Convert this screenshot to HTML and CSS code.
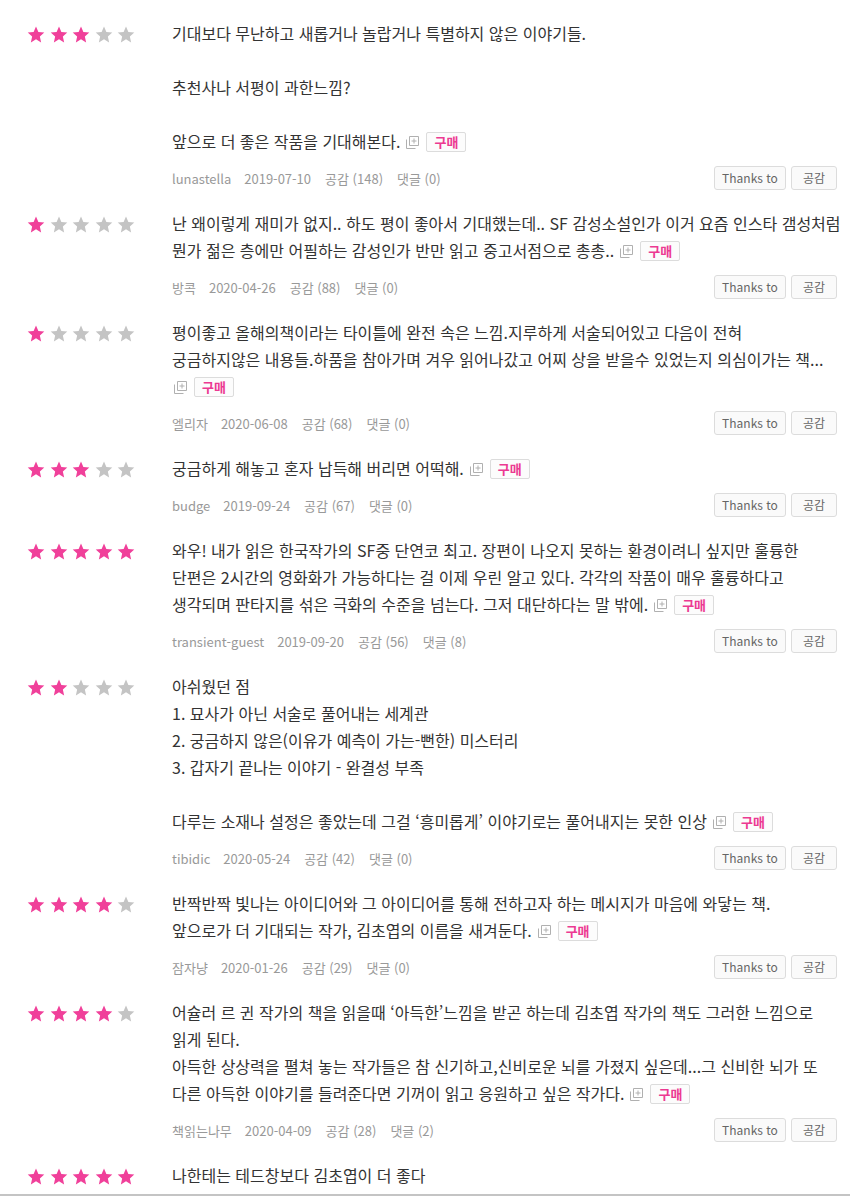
FILE: index.html
```html
<!DOCTYPE html>
<html lang="ko">
<head>
<meta charset="utf-8">
<title>리뷰</title>
<link rel="stylesheet" href="styles.css">
</head>
<body>
<svg class="defs" width="0" height="0" aria-hidden="true">
  <symbol id="star" viewBox="0 0 19 18.5">
    <path d="M9.5 .5 L12.1 6.5 L18.53 7.06 L13.7 11.4 L15.09 17.9 L9.5 14.5 L3.91 17.9 L5.3 11.4 L.47 7.06 L6.9 6.5Z"/>
  </symbol>
  <symbol id="more" viewBox="0 0 13 13">
    <path d="M3.5 .5 H12.5 V9.5 H3.5 Z M8 2.5 V7.5 M5.5 5 H10.5" fill="none" stroke="#b0b0b0" stroke-width="1"/>
    <path d="M.5 3.5 V12.5 H9.5" fill="none" stroke="#b0b0b0" stroke-width="1"/>
  </symbol>
</svg>
<div class="page">
  <ul class="reviews">
    <li class="review">
      <div class="stars s3"><svg><use href="#star"/></svg><svg><use href="#star"/></svg><svg><use href="#star"/></svg><svg><use href="#star"/></svg><svg><use href="#star"/></svg></div>
      <div class="body">
        <p class="text">기대보다 무난하고 새롭거나 놀랍거나 특별하지 않은 이야기들.<br><br>추천사나 서평이 과한느낌?<br><br>앞으로 더 좋은 작품을 기대해본다.<span class="more"><svg><use href="#more"/></svg></span><span class="buy">구매</span></p>
        <div class="meta"><span class="user">lunastella</span><span>2019-07-10</span><span>공감 (148)</span><span>댓글 (0)</span><div class="btns"><button class="btn thanks">Thanks to</button><button class="btn like">공감</button></div></div>
      </div>
    </li>
    <li class="review">
      <div class="stars s1"><svg><use href="#star"/></svg><svg><use href="#star"/></svg><svg><use href="#star"/></svg><svg><use href="#star"/></svg><svg><use href="#star"/></svg></div>
      <div class="body">
        <p class="text">난 왜이렇게 재미가 없지.. 하도 평이 좋아서 기대했는데.. SF 감성소설인가 이거 요즘 인스타 갬성처럼<br>뭔가 젊은 층에만 어필하는 감성인가 반만 읽고 중고서점으로 총총..<span class="more"><svg><use href="#more"/></svg></span><span class="buy">구매</span></p>
        <div class="meta"><span class="user">방콕</span><span>2020-04-26</span><span>공감 (88)</span><span>댓글 (0)</span><div class="btns"><button class="btn thanks">Thanks to</button><button class="btn like">공감</button></div></div>
      </div>
    </li>
    <li class="review">
      <div class="stars s1"><svg><use href="#star"/></svg><svg><use href="#star"/></svg><svg><use href="#star"/></svg><svg><use href="#star"/></svg><svg><use href="#star"/></svg></div>
      <div class="body">
        <p class="text">평이좋고 올해의책이라는 타이틀에 완전 속은 느낌.지루하게 서술되어있고 다음이 전혀<br>궁금하지않은 내용들.하품을 참아가며 겨우 읽어나갔고 어찌 상을 받을수 있었는지 의심이가는 책...<br><span class="more first"><svg><use href="#more"/></svg></span><span class="buy">구매</span></p>
        <div class="meta"><span class="user">엘리자</span><span>2020-06-08</span><span>공감 (68)</span><span>댓글 (0)</span><div class="btns"><button class="btn thanks">Thanks to</button><button class="btn like">공감</button></div></div>
      </div>
    </li>
    <li class="review">
      <div class="stars s3"><svg><use href="#star"/></svg><svg><use href="#star"/></svg><svg><use href="#star"/></svg><svg><use href="#star"/></svg><svg><use href="#star"/></svg></div>
      <div class="body">
        <p class="text">궁금하게 해놓고 혼자 납득해 버리면 어떡해.<span class="more"><svg><use href="#more"/></svg></span><span class="buy">구매</span></p>
        <div class="meta"><span class="user">budge</span><span>2019-09-24</span><span>공감 (67)</span><span>댓글 (0)</span><div class="btns"><button class="btn thanks">Thanks to</button><button class="btn like">공감</button></div></div>
      </div>
    </li>
    <li class="review">
      <div class="stars s5"><svg><use href="#star"/></svg><svg><use href="#star"/></svg><svg><use href="#star"/></svg><svg><use href="#star"/></svg><svg><use href="#star"/></svg></div>
      <div class="body">
        <p class="text">와우! 내가 읽은 한국작가의 SF중 단연코 최고. 장편이 나오지 못하는 환경이려니 싶지만 훌륭한<br>단편은 2시간의 영화화가 가능하다는 걸 이제 우린 알고 있다. 각각의 작품이 매우 훌륭하다고<br>생각되며 판타지를 섞은 극화의 수준을 넘는다. 그저 대단하다는 말 밖에.<span class="more"><svg><use href="#more"/></svg></span><span class="buy">구매</span></p>
        <div class="meta"><span class="user">transient-guest</span><span>2019-09-20</span><span>공감 (56)</span><span>댓글 (8)</span><div class="btns"><button class="btn thanks">Thanks to</button><button class="btn like">공감</button></div></div>
      </div>
    </li>
    <li class="review">
      <div class="stars s2"><svg><use href="#star"/></svg><svg><use href="#star"/></svg><svg><use href="#star"/></svg><svg><use href="#star"/></svg><svg><use href="#star"/></svg></div>
      <div class="body">
        <p class="text">아쉬웠던 점<br>1. 묘사가 아닌 서술로 풀어내는 세계관<br>2. 궁금하지 않은(이유가 예측이 가는-뻔한) 미스터리<br>3. 갑자기 끝나는 이야기 - 완결성 부족<br><br>다루는 소재나 설정은 좋았는데 그걸 ‘흥미롭게’ 이야기로는 풀어내지는 못한 인상<span class="more"><svg><use href="#more"/></svg></span><span class="buy">구매</span></p>
        <div class="meta"><span class="user">tibidic</span><span>2020-05-24</span><span>공감 (42)</span><span>댓글 (0)</span><div class="btns"><button class="btn thanks">Thanks to</button><button class="btn like">공감</button></div></div>
      </div>
    </li>
    <li class="review">
      <div class="stars s4"><svg><use href="#star"/></svg><svg><use href="#star"/></svg><svg><use href="#star"/></svg><svg><use href="#star"/></svg><svg><use href="#star"/></svg></div>
      <div class="body">
        <p class="text">반짝반짝 빛나는 아이디어와 그 아이디어를 통해 전하고자 하는 메시지가 마음에 와닿는 책.<br>앞으로가 더 기대되는 작가, 김초엽의 이름을 새겨둔다.<span class="more"><svg><use href="#more"/></svg></span><span class="buy">구매</span></p>
        <div class="meta"><span class="user">잠자냥</span><span>2020-01-26</span><span>공감 (29)</span><span>댓글 (0)</span><div class="btns"><button class="btn thanks">Thanks to</button><button class="btn like">공감</button></div></div>
      </div>
    </li>
    <li class="review">
      <div class="stars s4"><svg><use href="#star"/></svg><svg><use href="#star"/></svg><svg><use href="#star"/></svg><svg><use href="#star"/></svg><svg><use href="#star"/></svg></div>
      <div class="body">
        <p class="text">어슐러 르 귄 작가의 책을 읽을때 ‘아득한’느낌을 받곤 하는데 김초엽 작가의 책도 그러한 느낌으로<br>읽게 된다.<br>아득한 상상력을 펼쳐 놓는 작가들은 참 신기하고,신비로운 뇌를 가졌지 싶은데...그 신비한 뇌가 또<br>다른 아득한 이야기를 들려준다면 기꺼이 읽고 응원하고 싶은 작가다.<span class="more"><svg><use href="#more"/></svg></span><span class="buy">구매</span></p>
        <div class="meta"><span class="user">책읽는나무</span><span>2020-04-09</span><span>공감 (28)</span><span>댓글 (2)</span><div class="btns"><button class="btn thanks">Thanks to</button><button class="btn like">공감</button></div></div>
      </div>
    </li>
    <li class="review">
      <div class="stars s5"><svg><use href="#star"/></svg><svg><use href="#star"/></svg><svg><use href="#star"/></svg><svg><use href="#star"/></svg><svg><use href="#star"/></svg></div>
      <div class="body">
        <p class="text">나한테는 테드창보다 김초엽이 더 좋다</p>
      </div>
    </li>
  </ul>
</div>
</body>
</html>
```

FILE: styles.css
```css
* { box-sizing: border-box; }
html, body {
  margin: 0;
  padding: 0;
  background: #fff;
}
body {
  font-family: "Noto Sans CJK KR", "Noto Sans", sans-serif;
  color: #333;
  width: 850px;
  height: 1197px;
  overflow: hidden;
}
.defs { position: absolute; width: 0; height: 0; }
.page {
  height: 1196px;
  overflow: hidden;
  border-bottom: 2px solid #c4c4c4;
}
.reviews {
  list-style: none;
  margin: 0;
  padding: 0;
}
.review {
  display: flex;
  padding-top: 20px;
}
.stars {
  width: 172px;
  flex: none;
  padding-left: 27px;
  padding-top: 6px;
  display: flex;
  align-items: flex-start;
  height: 30px;
}
.stars svg {
  width: 18px;
  height: 17px;
  margin-right: 4.5px;
  fill: #c4c4c4;
  flex: none;
}
.s1 svg:nth-child(-n+1),
.s2 svg:nth-child(-n+2),
.s3 svg:nth-child(-n+3),
.s4 svg:nth-child(-n+4),
.s5 svg:nth-child(-n+5) { fill: #f0409a; }
.body {
  flex: 1;
  min-width: 0;
  padding-right: 13px;
}
.text {
  margin: 0;
  font-size: 16px;
  line-height: 27px;
  white-space: nowrap;
  color: #333;
}
.more {
  display: inline-block;
  width: 13px;
  height: 13px;
  margin-left: 6px;
  vertical-align: -1px;
}
.more.first { margin-left: 2px; }
.more svg { width: 13px; height: 13px; display: block; }
.buy {
  display: inline-block;
  margin-left: 7px;
  height: 20px;
  line-height: 18px;
  padding: 0 7px;
  border: 1px solid #dcdcdc;
  border-radius: 2px;
  background: #fcfcfc;
  color: #ec3a92;
  font-size: 13px;
  font-weight: bold;
  vertical-align: 1px;
}
.meta {
  display: flex;
  align-items: center;
  height: 24px;
  margin-top: 11px;
  font-size: 13px;
  color: #999;
}
.meta > span { margin-right: 14px; }
.meta .user { color: #999; margin-right: 13px; }
.btns {
  margin-left: auto;
  display: flex;
  gap: 5px;
}
.btn {
  font-family: "Noto Sans CJK KR", "Noto Sans", sans-serif;
  height: 24px;
  padding: 0;
  border: 1px solid #dcdcdc;
  border-radius: 3px;
  background: #fafafa;
  color: #666;
  font-size: 12px;
  line-height: 22px;
}
.thanks { width: 72px; }
.like { width: 46px; }
```
